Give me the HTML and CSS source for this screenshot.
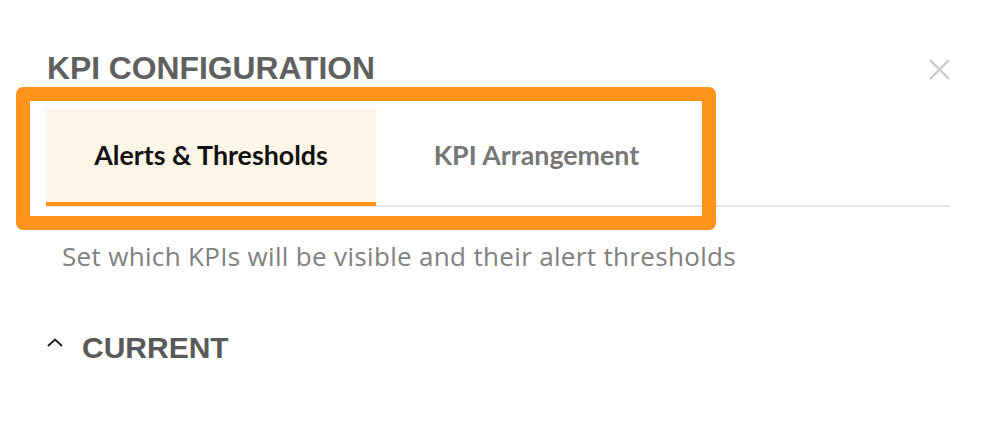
FILE: index.html
```html
<!DOCTYPE html>
<html lang="en">
<head>
<meta charset="utf-8">
<title>KPI Configuration</title>
<link rel="stylesheet" href="styles.css">
</head>
<body>
<div class="dialog">
  <div class="header">
    <h1 class="title">KPI CONFIGURATION</h1>
    <button class="close" aria-label="Close">
      <svg width="21" height="21" viewBox="0 0 21 21"><path d="M1 1L20 20M20 1L1 20" stroke="#c9c9c9" stroke-width="2.2" fill="none"/></svg>
    </button>
  </div>
  <div class="tabs">
    <div class="tab active">Alerts &amp; Thresholds</div>
    <div class="tab second">KPI Arrangement</div>
  </div>
  <p class="subtitle">Set which KPIs will be visible and their alert thresholds</p>
  <div class="section">
    <svg class="chevron" width="16" height="9" viewBox="0 0 16 9"><path d="M1 8L8 1.5L15 8" stroke="#222" stroke-width="2" fill="none"/></svg>
    <span class="section-title">CURRENT</span>
  </div>
  <div class="highlight"></div>
</div>
</body>
</html>
```

FILE: styles.css
```css
html, body {
  margin: 0;
  padding: 0;
  background: #fff;
}
.dialog {
  position: relative;
  padding: 53px 44px 0 46px;
  font-family: "Lato", "Liberation Sans", sans-serif;
}
.header {
  display: flex;
  justify-content: space-between;
  align-items: flex-start;
}
.title {
  margin: 0 0 0 1px;
  font-family: "Liberation Sans", Arial, sans-serif;
  font-weight: bold;
  font-size: 31.8px;
  line-height: 1;
  color: #606060;
}
.close {
  margin: 6px 0 0 0;
  padding: 0;
  border: 0;
  background: none;
  width: 21px;
  height: 21px;
  display: block;
}
.close svg { display: block; }
.tabs {
  margin-top: 24px;
  display: flex;
  border-bottom: 2px solid #e4e4e4;
}
.tab {
  width: 330px;
  height: 93px;
  display: flex;
  align-items: center;
  justify-content: center;
  font-size: 26.8px;
  font-weight: bold;
  color: #777;
  border-bottom: 4px solid transparent;
  margin-bottom: -1px;
}
.tab.second {
  width: 321px;
}
.tab.active {
  background: #fff5e8;
  color: #111;
  border-bottom-color: #ff941c;
}
.subtitle {
  margin: 34px 0 0 16px;
  font-family: "Open Sans", "Lato", sans-serif;
  font-size: 26px;
  letter-spacing: 0.33px;
  line-height: 30px;
  color: #808080;
}
.section {
  margin-top: 62.5px;
  display: flex;
  align-items: flex-start;
}
.chevron {
  display: block;
  margin: 5px 19px 0 1px;
}
.section-title {
  font-family: "Liberation Sans", Arial, sans-serif;
  font-weight: bold;
  font-size: 30px;
  line-height: 1;
  color: #595959;
}
.highlight {
  position: absolute;
  left: 16px;
  top: 87px;
  width: 672px;
  height: 115px;
  border: 14px solid #ff941c;
  border-radius: 7px;
  pointer-events: none;
}
```
